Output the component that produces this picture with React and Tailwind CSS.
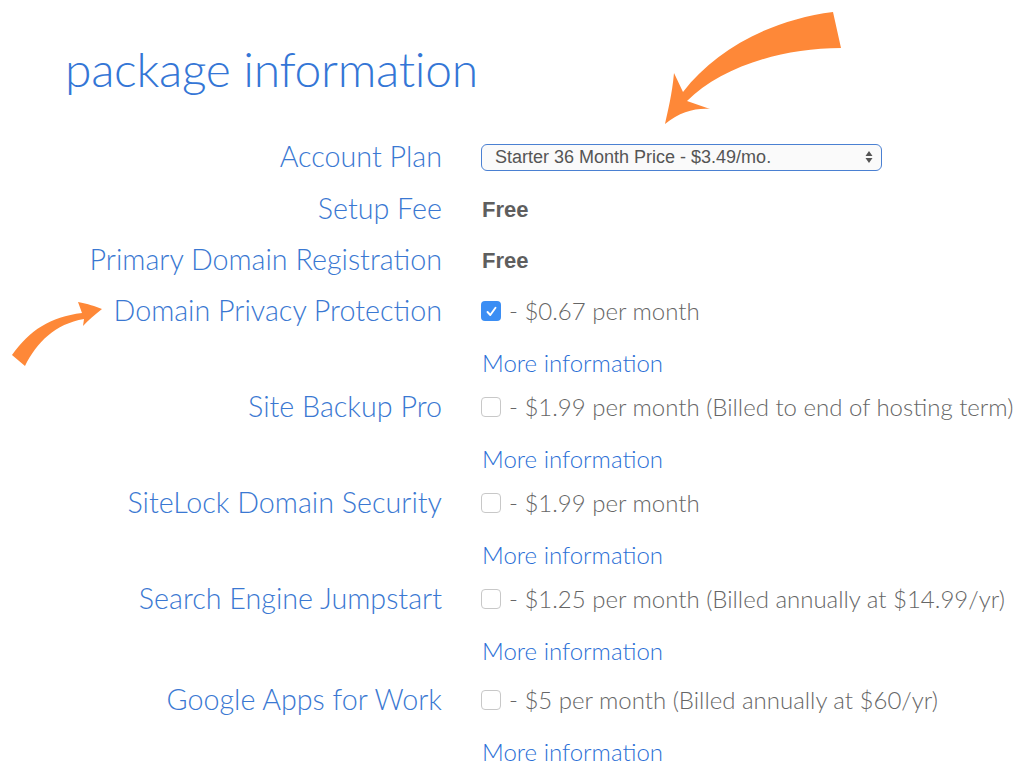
import React from 'react';

const addons = [
  { label: 'Domain Privacy Protection', price: '- $0.67 per month', checked: true },
  { label: 'Site Backup Pro', price: '- $1.99 per month (Billed to end of hosting term)' },
  { label: 'SiteLock Domain Security', price: '- $1.99 per month' },
  { label: 'Search Engine Jumpstart', price: '- $1.25 per month (Billed annually at $14.99/yr)', tall: true },
  { label: 'Google Apps for Work', price: '- $5 per month (Billed annually at $60/yr)' },
];

function Checkbox({ checked }) {
  if (checked) {
    return (
      <span className="flex h-[20px] w-[20px] shrink-0 items-center justify-center rounded-[4px] bg-[#3b8ef4]">
        <svg width="13" height="13" viewBox="0 0 13 13" fill="none">
          <path d="M2.5 7 L5.3 10 L10.5 2.8" stroke="white" strokeWidth="1.9" strokeLinecap="round" strokeLinejoin="round" />
        </svg>
      </span>
    );
  }
  return <span className="h-[20px] w-[20px] shrink-0 rounded-[4px] border border-[#c8c8c8] bg-white" />;
}

function Label({ children }) {
  return (
    <div className="w-[442px] shrink-0 text-right text-[28.7px] font-light text-[#3a78d2]">{children}</div>
  );
}

export default function App() {
  return (
    <div className="relative h-[774px] w-[1024px] overflow-hidden bg-white font-['Lato',sans-serif]">
      <h1 className="pl-[65px] pt-[45px] text-[48px] font-light leading-none tracking-[-0.3px] text-[#3476d6]">
        package information
      </h1>

      <div className="mt-[38px] flex flex-col">
        <div className="flex h-[52px] items-center">
          <Label>Account Plan</Label>
          <div className="ml-[39px] flex h-[27px] w-[401px] items-center justify-between rounded-[6px] border-[1.5px] border-[#4a80d2] bg-[#fafafa] pl-[13px] pr-[8px] font-['Liberation_Sans',sans-serif] text-[18px] text-[#555]">
            <span>Starter 36 Month Price - $3.49/mo.</span>
            <svg width="8" height="14" viewBox="0 0 8 14">
              <path d="M4 1 L7.5 6 L0.5 6 Z M4 13 L7.5 8 L0.5 8 Z" fill="#555" />
            </svg>
          </div>
        </div>

        <div className="flex h-[52px] items-center">
          <Label>Setup Fee</Label>
          <div className="ml-[40px] font-['Liberation_Sans',sans-serif] text-[22px] font-bold text-[#5e5e5e]">Free</div>
        </div>

        <div className="flex h-[50px] items-center">
          <Label>Primary Domain Registration</Label>
          <div className="ml-[40px] font-['Liberation_Sans',sans-serif] text-[22px] font-bold text-[#5e5e5e]">Free</div>
        </div>

        {addons.map((a) => (
          <div key={a.label} className="flex flex-col">
            <div className="flex h-[52px] items-center">
              <Label>{a.label}</Label>
              <div className="ml-[39px] flex items-center gap-[8px] text-[24px] font-light text-[#666]">
                <Checkbox checked={a.checked} />
                <span>{a.price}</span>
              </div>
            </div>
            <div className={a.tall ? 'flex h-[49px] items-start' : 'flex h-[44px] items-start'}>
              <div className="ml-[482px] mt-[14px] text-[24px] leading-none font-light text-[#2b6fd6]">More information</div>
            </div>
          </div>
        ))}
      </div>

      <svg className="pointer-events-none absolute left-0 top-0" width="1024" height="774" viewBox="0 0 1024 774">
        <path
          d="M833 12 C 770 20, 715 50, 683 92 L 674 73 C 672 95, 668 110, 665 124 C 680 112, 695 108, 710 109 L 687 101 C 720 68, 780 48, 841 48 Z"
          fill="#fe8838"
        />
        <path
          d="M12 355 C 30 330, 50 317, 82 313 L 78 302 C 88 304, 95 306, 102 309 C 95 315, 88 320, 83 326 L 84 319 C 55 324, 37 342, 25 366 Z"
          fill="#fe8838"
        />
      </svg>
    </div>
  );
}
